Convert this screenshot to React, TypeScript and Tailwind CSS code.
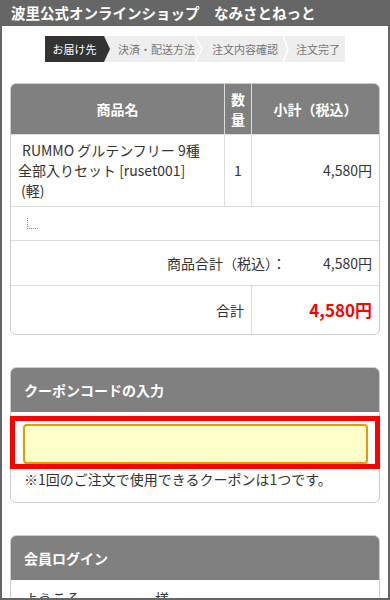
import React from "react";

const font = "font-['Noto_Sans_CJK_JP','Noto_Sans',sans-serif]";

function Chevron({ w }: { w: number }) {
  return (
    <svg width={w} height={26} viewBox={`0 0 ${w} 26`} className="shrink-0 block">
      <polyline points={`0,0 ${w - 1},13 0,26`} fill="none" stroke="#ffffff" strokeWidth="1.5" />
    </svg>
  );
}

export default function App() {
  return (
    <div className={`${font} w-[390px] h-[600px] overflow-hidden bg-white border-x-2 border-b-2 border-[#666] text-[#333]`}>
      <div className="h-[26px] bg-[#666] pl-[9px] flex items-center">
        <span className="text-white font-bold text-[14.5px] leading-none">波里公式オンラインショップ　なみさとねっと</span>
      </div>

      <div className="px-2">
        <div className="mt-[10px] mx-auto w-[300px] h-[26px] bg-[#eeeeee] flex items-stretch text-[11px] leading-[26px] text-[#777]">
          <div className="w-[59px] bg-[#333] text-white text-center shrink-0">お届け先</div>
          <svg width={6} height={26} viewBox="0 0 6 26" className="shrink-0 block">
            <polygon points="0,0 6,13 0,26" fill="#333" />
          </svg>
          <div className="w-[85px] pl-[8px] shrink-0 whitespace-nowrap">決済・配送方法</div>
          <Chevron w={8} />
          <div className="w-[80px] pl-[9px] shrink-0 whitespace-nowrap">注文内容確認</div>
          <Chevron w={6} />
          <div className="flex-1 pl-[7px] whitespace-nowrap">注文完了</div>
        </div>

        <div className="mt-[21px] border border-[#cccccc] rounded-[6px] overflow-hidden text-[14px]">
          <div className="grid grid-cols-[213px_27px_1fr] h-[50px] bg-[#808080] text-white font-bold">
            <div className="flex items-center justify-center">商品名</div>
            <div className="flex flex-col items-center justify-center leading-[20px] border-l border-[#dddddd]">
              <span>数</span>
              <span>量</span>
            </div>
            <div className="flex items-center justify-center border-l border-[#dddddd]">小計（税込）</div>
          </div>
          <div className="grid grid-cols-[213px_27px_1fr] h-[72px] border-t border-[#dddddd]">
            <div className="pl-[7px] pt-[5px] leading-[20px]">
              <div className="pl-[4px]">RUMMO グルテンフリー 9種</div>
              <div>全部入りセット [ruset001]</div>
              <div className="pl-[3px]">(軽)</div>
            </div>
            <div className="flex items-center justify-center border-l border-[#dddddd]">1</div>
            <div className="flex items-center justify-end pr-[7px] border-l border-[#dddddd]">4,580円</div>
          </div>
          <div className="h-[34px] border-t border-[#dddddd] pl-[16px] pt-[11px]">
            <div className="w-[11px] h-[11px] border-l border-b border-dotted border-[#888]"></div>
          </div>
          <div className="h-[45px] border-t border-[#dddddd] flex items-center justify-end">
            <span>商品合計（税込）：</span>
            <span className="w-[93px] text-right pr-[7px]">4,580円</span>
          </div>
          <div className="grid grid-cols-[240px_1fr] h-[49px] border-t border-[#dddddd]">
            <div className="flex items-center justify-end pr-[7px]">合計</div>
            <div className="flex items-center justify-end pr-[7px] border-l border-[#dddddd] text-[#ff0000] font-bold text-[17px]">4,580円</div>
          </div>
        </div>

        <div className="mt-[32px] border border-[#cccccc] rounded-[6px] text-[14px]">
          <div className="h-[44px] bg-[#808080] rounded-t-[5px] flex items-center pl-[13px] text-white font-bold text-[14px]">
            クーポンコードの入力
          </div>
          <div className="mt-[4px] -mx-[1px] border-[5px] border-[#ff0000] pt-[3px] pl-[8px] pr-[7px]">
            <div className="h-[40px] bg-[#ffffcc] border-2 border-[#e89b00] rounded-[4px]"></div>
          </div>
          <div className="pl-[13px] leading-[20px] pb-[13px]">※1回のご注文で使用できるクーポンは1つです。</div>
        </div>

        <div className="mt-[32px] border border-[#cccccc] rounded-[6px] text-[14px]">
          <div className="h-[44px] bg-[#808080] rounded-t-[5px] flex items-center pl-[13px] text-white font-bold text-[14px]">
            会員ログイン
          </div>
          <div className="pl-[13px] pt-[8px] leading-[20px] flex">
            <span className="w-[131px]">ようこそ</span>
            <span>様</span>
          </div>
        </div>
      </div>
    </div>
  );
}
